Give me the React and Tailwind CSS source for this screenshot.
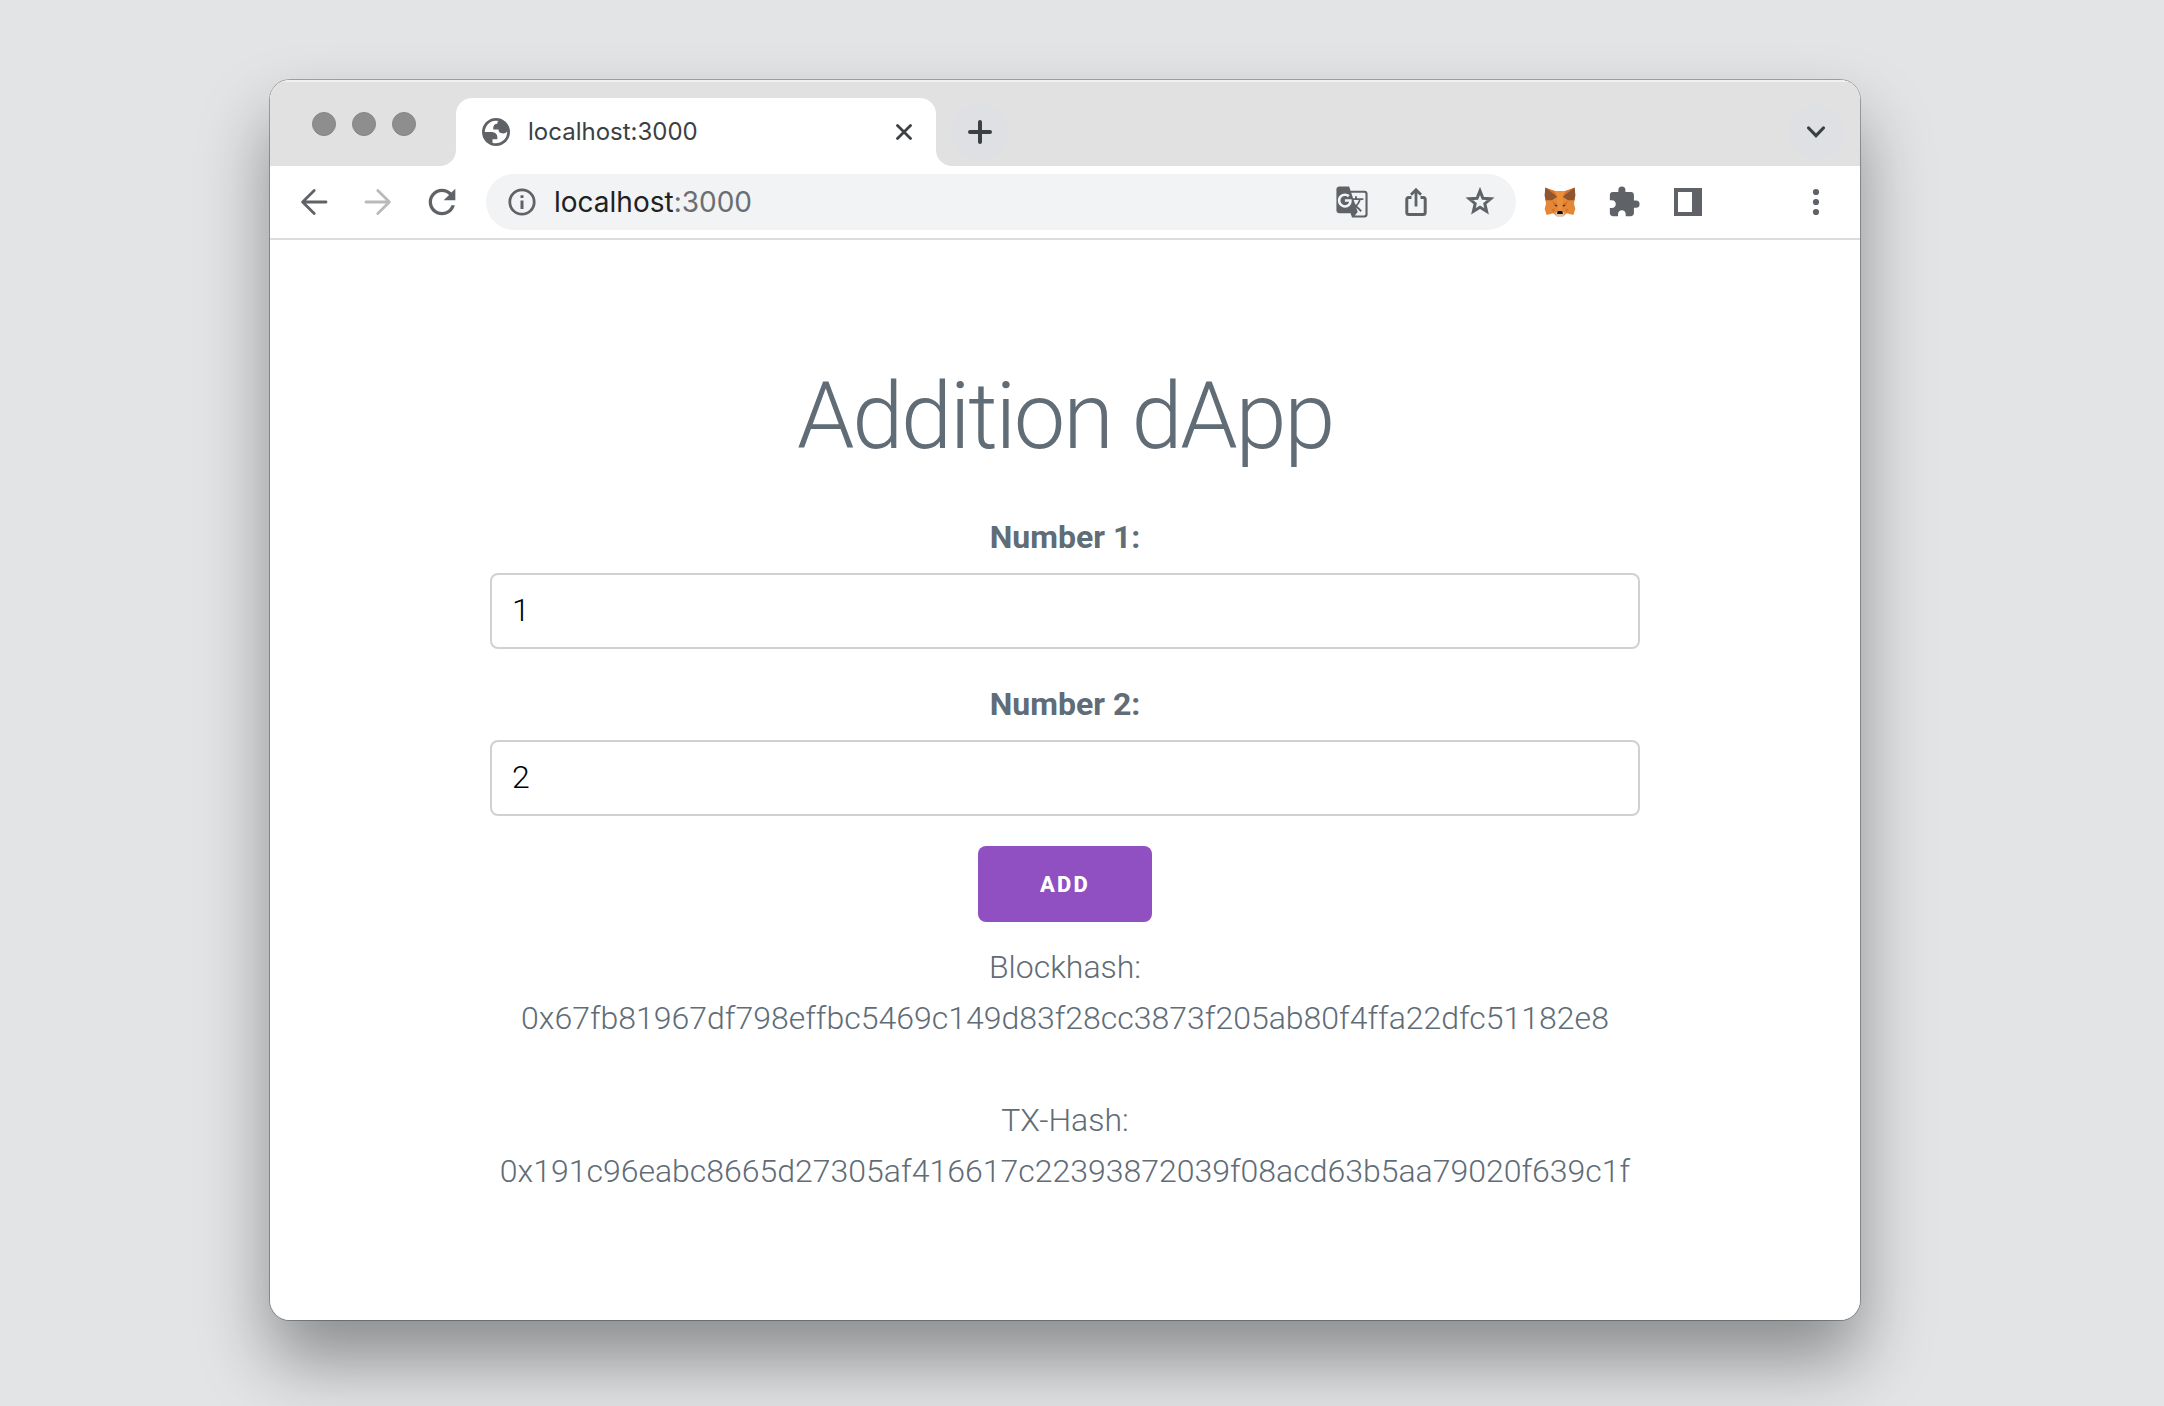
import { useState } from "react";
import { MdExtension, MdGTranslate, MdRefresh } from "react-icons/md";

function ArrowIcon({ className }) {
  return (
    <svg viewBox="0 0 28 28" className={className} fill="none" stroke="currentColor" strokeWidth="2.8" strokeLinecap="round" strokeLinejoin="round" aria-hidden="true">
      <path d="M26 14H3M14.2 2.6 2.6 14l11.6 11.4" />
    </svg>
  );
}

function GlobeIcon() {
  return (
    <svg viewBox="2 2 20 20" className="size-7 text-[#5f6368]" fill="currentColor" fillRule="evenodd" aria-hidden="true">
      <path d="M12 2C6.480 2 2 6.480 2 12s4.480 10 10 10 10-4.480 10-10S17.520 2 12 2zM4 12h4.4c3.407.022 4.922 1.73 4.543 5.127H9.488v2.47a8.004 8.004 0 0 0 10.498-8.08C19.327 12.707 18.332 13 17 13c-2.137 0-3.206-.916-3.206-2.75h-3.748c-.274-2.728.683-4.092 2.87-4.092 0-.975.327-1.597.811-1.97A8.004 8.004 0 0 0 4 12z" />
    </svg>
  );
}

function InfoIcon() {
  return (
    <svg viewBox="0 0 28 28" className="size-7" fill="none" stroke="currentColor" strokeWidth="2.8" aria-hidden="true">
      <circle cx="14" cy="14" r="12.2" />
      <path d="M14 12.600V21M14 7.200V10" strokeWidth="3" />
    </svg>
  );
}

function ShareIcon() {
  return (
    <svg viewBox="0 0 24 30" className="w-6" fill="none" stroke="currentColor" strokeWidth="3" aria-hidden="true">
      <path d="M7.500 10.500H4.800a2 2 0 0 0-2 2v13a2 2 0 0 0 2 2h14.400a2 2 0 0 0 2-2v-13a2 2 0 0 0-2-2H16.500" />
      <path d="M12 19.500V3M7 7.800 12 2.800l5 5" strokeWidth="2.8" />
    </svg>
  );
}

function StarIcon() {
  return (
    <svg viewBox="0 0 30 30" className="w-[30px]" fill="none" stroke="currentColor" strokeWidth="3" strokeMiterlimit="10" aria-hidden="true">
      <path d="M15 3.900 17.900 11.200 25.700 11.700 19.800 16.700 21.600 24.300 15 20.200 8.400 24.300 10.200 16.700 4.300 11.700 12.100 11.200Z" />
    </svg>
  );
}

function FoxIcon() {
  return (
    <svg viewBox="0 0 96 90" className="w-8" aria-hidden="true">
      <path fill="#e58734" d="M5 2 32 12H64L91 2 94 26 90 50 94 66 88 84 68 79 58 88H38L28 79 8 84 2 66 6 50 2 26Z" />
      <path fill="#d9732b" d="M5 2 40 30 32 12ZM91 2 56 30 64 12Z" />
      <path fill="#8f5531" d="M4 1 40 29 24 40 5 40 2 24ZM92 1 56 29 72 40 91 40 94 24Z" />
      <path fill="#ea8f3c" d="M40 29 32 12H64L56 29 58 54 54 72H42L38 54Z" />
      <path fill="#d97331" d="M24 42 40 51 38 58 28 52ZM72 42 56 51 58 58 68 52ZM22 66 34 65 28 77ZM74 66 62 65 68 77Z" />
      <path fill="#3c3a3f" d="M31 53 40 54 39 59 33 57ZM65 53 56 54 57 59 63 57Z" />
      <path fill="#d5c6b8" d="M34 78 42 72H54L62 78 57 89H39Z" />
      <path fill="#12100f" d="M41 72H55L57 81H39Z" />
    </svg>
  );
}

function SidePanelIcon() {
  return (
    <svg viewBox="0 0 28 28" className="size-7" fill="currentColor" fillRule="evenodd" aria-hidden="true">
      <path d="M0 0H28V28H0ZM4 4V24H18V4Z" />
    </svg>
  );
}

function MenuIcon() {
  return (
    <svg viewBox="0 0 28 28" className="size-7" fill="currentColor" aria-hidden="true">
      <circle cx="14" cy="4" r="3.1" />
      <circle cx="14" cy="14" r="3.1" />
      <circle cx="14" cy="24" r="3.1" />
    </svg>
  );
}

function ToolButton({ label, children, className = "" }) {
  return (
    <button type="button" aria-label={label} className={`flex h-14 w-16 shrink-0 items-center justify-center ${className}`}>
      {children}
    </button>
  );
}

function TabFoot({ className }) {
  return (
    <svg viewBox="0 0 16 16" className={`absolute bottom-0 size-4 text-white ${className}`} fill="currentColor" aria-hidden="true">
      <path d="M16 0V16H0A16 16 0 0 0 16 0Z" />
    </svg>
  );
}

function TabStrip() {
  return (
    <div className="flex h-[86px] items-end bg-[#e1e1e1] shadow-[inset_0_2px_0_rgba(255,255,255,0.5)]">
      <div className="flex w-[186px] shrink-0 gap-4 self-start pt-8 pl-[42px]">
        <span className="size-6 rounded-full border border-[#858585] bg-[#8e8e8e]" />
        <span className="size-6 rounded-full border border-[#858585] bg-[#8e8e8e]" />
        <span className="size-6 rounded-full border border-[#858585] bg-[#8e8e8e]" />
      </div>
      <div className="relative flex h-[68px] w-[480px] items-center rounded-t-2xl bg-white pr-4 pl-[26px]">
        <TabFoot className="-left-4" />
        <TabFoot className="-right-4 -scale-x-100" />
        <GlobeIcon />
        <span className="ml-[18px] flex-1 text-2xl text-[#3c4043]">localhost:3000</span>
        <button type="button" aria-label="Close tab" className="flex size-8 items-center justify-center text-[#3c4043]">
          <svg viewBox="0 0 16 16" className="size-4" stroke="currentColor" strokeWidth="2.8" strokeLinecap="round" aria-hidden="true">
            <path d="m1.5 1.5 13 13m0-13-13 13" />
          </svg>
        </button>
      </div>
      <button type="button" aria-label="New tab" className="mb-1.5 ml-4 flex size-14 items-center justify-center rounded-full bg-[#dee0e4] text-[#3c4043]">
        <svg viewBox="0 0 24 24" className="size-6" stroke="currentColor" strokeWidth="4" strokeLinecap="round" aria-hidden="true">
          <path d="M12 2v20M2 12h20" />
        </svg>
      </button>
      <button type="button" aria-label="Search tabs" className="mr-4 mb-1.5 ml-auto flex size-14 items-center justify-center rounded-full bg-[#dee0e4] text-[#3c4043]">
        <svg viewBox="0 0 18 12" className="w-[18px]" fill="none" stroke="currentColor" strokeWidth="3.2" strokeLinecap="round" aria-hidden="true">
          <path d="m1.6 2 7.4 7.6L16.400 2" />
        </svg>
      </button>
    </div>
  );
}

function Toolbar() {
  return (
    <div className="flex items-center border-b-2 border-[#dcdcdc] bg-white px-3 py-2 text-[#5f6368]">
      <ToolButton label="Back">
        <ArrowIcon className="size-7" />
      </ToolButton>
      <ToolButton label="Forward" className="text-[#bababc]">
        <ArrowIcon className="size-7 rotate-180" />
      </ToolButton>
      <ToolButton label="Reload">
        <MdRefresh className="size-10" />
      </ToolButton>
      <div className="mx-3 flex h-14 min-w-0 flex-1 items-center rounded-full bg-[#f1f3f4] px-1">
        <ToolButton label="Site information">
          <InfoIcon />
        </ToolButton>
        <span className="flex-1 text-[28px] text-[#202124]">
          localhost<span className="text-[#6b6e71]">:3000</span>
        </span>
        <ToolButton label="Translate">
          <MdGTranslate className="size-[34px]" />
        </ToolButton>
        <ToolButton label="Share">
          <ShareIcon />
        </ToolButton>
        <ToolButton label="Bookmark">
          <StarIcon />
        </ToolButton>
      </div>
      <ToolButton label="MetaMask">
        <FoxIcon />
      </ToolButton>
      <ToolButton label="Extensions">
        <MdExtension className="size-[34px]" />
      </ToolButton>
      <ToolButton label="Side panel">
        <SidePanelIcon />
      </ToolButton>
      <ToolButton label="Menu" className="ml-16">
        <MenuIcon />
      </ToolButton>
    </div>
  );
}

function NumberField({ id, label, value, onChange }) {
  return (
    <>
      <label htmlFor={id} className="mb-2.5 font-bold">
        {label}
      </label>
      <input
        id={id}
        type="text"
        inputMode="numeric"
        value={value}
        onChange={(event) => onChange(event.target.value)}
        className="mb-[30px] h-[76px] w-full rounded-lg border-2 border-[#d1d1d1] px-5 pb-0.5 text-black outline-none"
      />
    </>
  );
}

function AdditionForm() {
  const [first, setFirst] = useState("1");
  const [second, setSecond] = useState("2");
  return (
    <main className="mx-auto flex w-full max-w-[1150px] flex-col items-center py-[120px] text-center font-['Roboto',sans-serif] text-[32px] leading-[51px] font-light text-[#606c76]">
      <h1 className="mb-[38px] text-[92px] leading-[114px] tracking-tight">Addition dApp</h1>
      <form className="flex w-full flex-col items-center" onSubmit={(event) => event.preventDefault()}>
        <NumberField id="number-1" label="Number 1:" value={first} onChange={setFirst} />
        <NumberField id="number-2" label="Number 2:" value={second} onChange={setSecond} />
        <button type="submit" className="mb-5 h-[76px] rounded-lg bg-[#9150c1] px-[62px] text-[22px] font-extrabold tracking-widest text-white uppercase">
          Add
        </button>
      </form>
      <p className="mb-[51px]">
        Blockhash:
        <br />
        0x67fb81967df798effbc5469c149d83f28cc3873f205ab80f4ffa22dfc51182e8
      </p>
      <p>
        TX-Hash:
        <br />
        0x191c96eabc8665d27305af416617c22393872039f08acd63b5aa79020f639c1f
      </p>
    </main>
  );
}

export default function App() {
  return (
    <div className="flex min-h-screen bg-[#e2e4e6] pt-20 pr-[304px] pb-[86px] pl-[270px] font-['Inter',sans-serif]">
      <div className="flex min-w-0 flex-1 rounded-[20px] shadow-[0_0_0_1px_rgba(0,0,0,0.28),0_40px_70px_rgba(0,0,0,0.39)]">
        <div className="flex min-w-0 flex-1 flex-col overflow-hidden rounded-[20px] bg-white">
          <TabStrip />
          <Toolbar />
          <AdditionForm />
        </div>
      </div>
    </div>
  );
}
